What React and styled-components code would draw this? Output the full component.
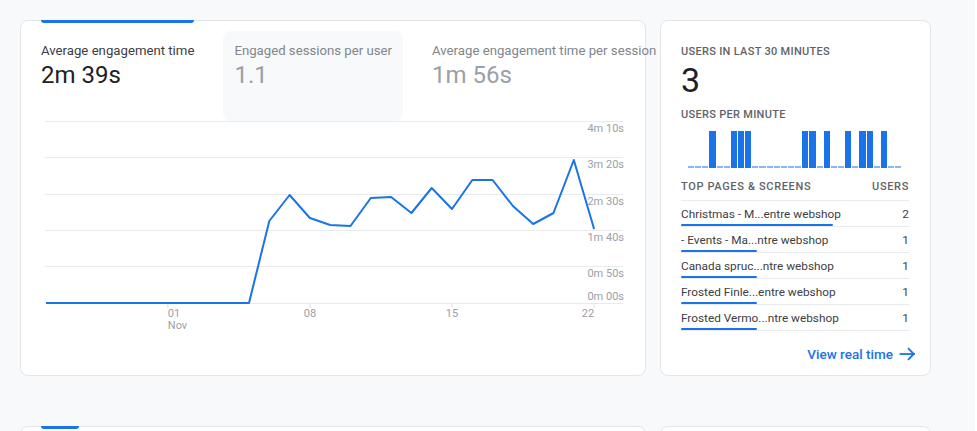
import React from 'react';
import styled, { createGlobalStyle, css } from 'styled-components';

const Global = createGlobalStyle`
  html, body { margin: 0; padding: 0; overflow: hidden; background: #ffffff; }
  body { font-family: Roboto, "Noto Sans", "Liberation Sans", Arial, sans-serif; -webkit-font-smoothing: antialiased; }
  * { box-sizing: border-box; }
`;

const Page = styled.div`
  width: 975px;
  height: 431px;
  overflow: hidden;
  background: #f8f9fa;
  padding: 20px 0 0 20px;
`;

const Grid = styled.div`
  display: grid;
  grid-template-columns: 626px 271px;
  column-gap: 14px;
  row-gap: 50px;
`;

const Card = styled.section`
  position: relative;
  background: #ffffff;
  border: 1px solid #e3e5e8;
  border-radius: 8px;
  height: ${p => p.$h || 356}px;
`;

const Tabs = styled.div`
  display: flex;
  gap: 18px;
  padding: 10px 0 0 9px;
`;

const Tab = styled.div`
  position: relative;
  height: 90px;
  padding: 10px 11px 0;
  border-radius: 8px;
  white-space: nowrap;
  background: ${p => (p.$hover ? '#f8f9fa' : 'transparent')};
  ${p => p.$active && css`
    &::before {
      content: '';
      position: absolute;
      top: -11px;
      left: 11px;
      right: 11px;
      height: 3px;
      background: #1a73e8;
      border-radius: 0 0 3px 3px;
    }
  `}
`;

const TabLabel = styled.div`
  font-size: 13.2px;
  line-height: 20px;
  color: ${p => (p.$active ? '#3c4043' : '#80868b')};
`;

const TabValue = styled.div`
  font-size: 24px;
  line-height: 28px;
  color: ${p => (p.$active ? '#202124' : '#9aa0a6')};
`;

const ChartSvg = styled.svg`
  display: block;
  font-family: Roboto, "Noto Sans", Arial, sans-serif;
`;

const SideCard = styled(Card)`
  padding: 23px 21px 0 20px;
  display: flex;
  flex-direction: column;
`;

const Caps = styled.div`
  font-size: 11px;
  line-height: 16px;
  font-weight: 500;
  letter-spacing: ${p => (p.$tight ? '0.3px' : '0.65px')};
  text-transform: uppercase;
  color: #5f6368;
  margin-top: ${p => p.$mt || 0}px;
`;

const BigNumber = styled.div`
  font-size: 34px;
  line-height: 40px;
  color: #202124;
`;

const Bars = styled.div`
  display: flex;
  align-items: flex-end;
  gap: 1px;
  width: 213px;
  height: 37px;
  margin: 8px 0 0 7px;
`;

const Bar = styled.div`
  flex: 1;
  height: ${p => (p.$on ? '37px' : '2px')};
  background: ${p => (p.$on ? '#1a73e8' : '#8ab4f8')};
`;

const TableHead = styled.div`
  display: flex;
  justify-content: space-between;
  margin-top: 11px;
  padding-bottom: 5px;
  border-bottom: 1px solid #e8eaed;
`;

const Row = styled.div`
  border-bottom: 1px solid #e8eaed;
  &:last-child { border-bottom: none; }
`;

const RowLine = styled.div`
  display: flex;
  justify-content: space-between;
  align-items: flex-end;
  height: 23px;
  font-size: 11.8px;
  line-height: 20px;
  color: #3c4043;
  white-space: nowrap;
`;

const RowBar = styled.div`
  height: 2px;
  background: #1a73e8;
  border-radius: 1px;
`;

const LinkRow = styled.div`
  display: flex;
  justify-content: flex-end;
  margin: 13px -7px 0 0;
`;

const Link = styled.a`
  display: inline-flex;
  align-items: center;
  gap: 6px;
  font-size: 13.5px;
  line-height: 20px;
  font-weight: 500;
  color: #1a73e8;
  text-decoration: none;
  cursor: pointer;
`;

const PeekIndicator = styled.div`
  width: 38px;
  height: 3px;
  margin-left: 20px;
  margin-top: -1px;
  background: #1a73e8;
  border-radius: 0 0 3px 3px;
`;

const tabs = [
  { label: 'Average engagement time', value: '2m 39s', active: true },
  { label: 'Engaged sessions per user', value: '1.1', hover: true },
  { label: 'Average engagement time per session', value: '1m 56s' },
];

const values = [
  182, 182, 182, 182, 182, 182, 182, 182, 182, 182, 182,
  100, 74, 97, 104, 105, 77, 76, 92, 67, 88, 59, 59, 85, 103, 92, 39, 108,
];

const gridY = [0.5, 36.5, 73.5, 109.5, 145.5, 182.5];
const yLabels = [
  ['4m 10s', 11], ['3m 20s', 47], ['2m 30s', 84], ['1m 40s', 120], ['0m 50s', 156], ['0m 00s', 179],
];
const dx = i => 25 + i * 20.3;
const xTicks = [
  { i: 6, t: '01', sub: 'Nov', anchor: 'start' },
  { i: 13, t: '08', anchor: 'middle' },
  { i: 20, t: '15', anchor: 'middle' },
  { i: 27, t: '22', anchor: 'end' },
];

function LineChart() {
  const pts = values.map((v, i) => `${dx(i).toFixed(1)},${v}`).join(' ');
  return (
    <ChartSvg width="624" height="234" viewBox="0 0 624 234">
      {gridY.map((y, k) => (
        <line key={k} x1="24" x2="602" y1={y} y2={y} stroke="#e8eaed" strokeWidth="1" />
      ))}
      {xTicks.map(tk => (
        <line key={tk.t} x1={dx(tk.i)} x2={dx(tk.i)} y1="182" y2="187" stroke="#e0e0e0" strokeWidth="1" />
      ))}
      {yLabels.map(([t, y]) => (
        <text key={t} x="603" y={y} textAnchor="end" fontSize="11" fill="#9aa0a6">{t}</text>
      ))}
      {xTicks.map(tk => (
        <g key={'l' + tk.t}>
          <text x={dx(tk.i)} y="196" textAnchor={tk.anchor} fontSize="11" fill="#9aa0a6">{tk.t}</text>
          {tk.sub && (
            <text x={dx(tk.i)} y="208" textAnchor={tk.anchor} fontSize="11" fill="#9aa0a6">{tk.sub}</text>
          )}
        </g>
      ))}
      <polyline points={pts} fill="none" stroke="#1a73e8" strokeWidth="2" strokeLinejoin="round" />
    </ChartSvg>
  );
}

const perMinute = Array.from({ length: 30 }, (_, i) => [3, 6, 7, 8, 16, 17, 19, 22, 24, 25, 27].includes(i));

const pages = [
  ['Christmas - M...entre webshop', 2],
  ['- Events - Ma...ntre webshop', 1],
  ['Canada spruc...ntre webshop', 1],
  ['Frosted Finle...entre webshop', 1],
  ['Frosted Vermo...ntre webshop', 1],
];

function ArrowRight() {
  return (
    <svg width="17" height="16" viewBox="0 0 17 16" fill="none" stroke="#1a73e8" strokeWidth="1.8" strokeLinecap="square">
      <line x1="1.5" y1="8" x2="15" y2="8" />
      <polyline points="9,2.2 14.8,8 9,13.8" fill="none" strokeLinecap="butt" />
    </svg>
  );
}

export default function App() {
  return (
    <>
      <Global />
      <Page>
        <Grid>
          <Card>
            <Tabs>
              {tabs.map(t => (
                <Tab key={t.label} $active={t.active} $hover={t.hover}>
                  <TabLabel $active={t.active}>{t.label}</TabLabel>
                  <TabValue $active={t.active}>{t.value}</TabValue>
                </Tab>
              ))}
            </Tabs>
            <LineChart />
          </Card>
          <SideCard>
            <Caps $tight>Users in last 30 minutes</Caps>
            <BigNumber>3</BigNumber>
            <Caps $tight $mt={7}>Users per minute</Caps>
            <Bars>
              {perMinute.map((on, i) => <Bar key={i} $on={on} />)}
            </Bars>
            <TableHead>
              <Caps>Top pages &amp; screens</Caps>
              <Caps>Users</Caps>
            </TableHead>
            {pages.map(([name, n]) => (
              <Row key={name}>
                <RowLine>
                  <span>{name}</span>
                  <span>{n}</span>
                </RowLine>
                <RowBar style={{ width: `${(n / 3) * 100}%` }} />
              </Row>
            ))}
            <LinkRow>
              <Link>View real time <ArrowRight /></Link>
            </LinkRow>
          </SideCard>
          <Card $h={200}>
            <PeekIndicator />
          </Card>
          <Card $h={200} />
        </Grid>
      </Page>
    </>
  );
}
